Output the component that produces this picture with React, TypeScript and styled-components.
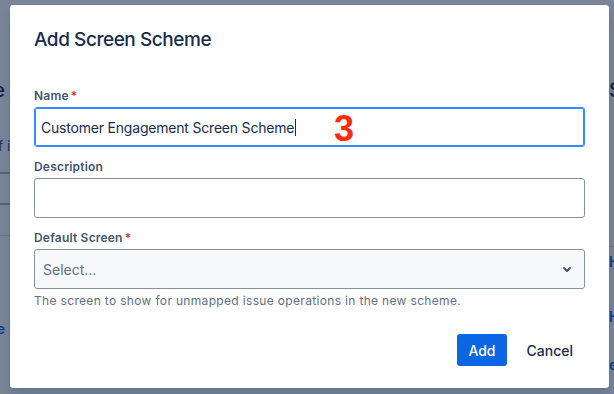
import React from "react";
import styled, { createGlobalStyle } from "styled-components";

const GlobalStyle = createGlobalStyle`
  html, body {
    margin: 0;
    padding: 0;
    font-family: Inter, "Noto Sans", "Liberation Sans", sans-serif;
    -webkit-font-smoothing: antialiased;
  }
`;

const Page = styled.div`
  position: relative;
  width: 614px;
  height: 394px;
  overflow: hidden;
  background: #ffffff;
`;

/* page that sits behind the dialog, only its edges show */
const BgPage = styled.div`
  display: flex;
  justify-content: space-between;
  height: 100%;
`;

const Edge = styled.div<{ $side: "left" | "right" }>`
  box-sizing: border-box;
  width: 10px;
  display: flex;
  flex-direction: column;
  align-items: ${(p) => (p.$side === "left" ? "flex-end" : "flex-start")};
  padding-left: ${(p) => (p.$side === "right" ? "5px" : "0")};
  padding-right: ${(p) => (p.$side === "left" ? "5px" : "0")};
  overflow: hidden;
`;

const BgHeading = styled.div<{ $top: number }>`
  margin-top: ${(p) => p.$top}px;
  font-size: 20px;
  line-height: 24px;
  font-weight: 500;
  color: #172b4d;
  white-space: nowrap;
`;

const BgText = styled.div<{ $top: number; $shift?: number }>`
  margin-top: ${(p) => p.$top}px;
  margin-right: ${(p) => -(p.$shift || 0)}px;
  font-size: 14px;
  line-height: 20px;
  color: #44546f;
  white-space: nowrap;
`;

const BgRule = styled.div<{ $top: number; $light?: boolean }>`
  align-self: stretch;
  margin-top: ${(p) => p.$top}px;
  margin-left: -10px;
  margin-right: -10px;
  height: ${(p) => (p.$light ? 1 : 2)}px;
  background: ${(p) => (p.$light ? "#dcdfe4" : "#b3b9c4")};
`;

const BgLink = styled.div<{ $top: number }>`
  margin-top: ${(p) => p.$top}px;
  font-size: 14px;
  line-height: 20px;
  font-weight: 600;
  color: #0c66e4;
  white-space: nowrap;
`;

const Blanket = styled.div`
  position: absolute;
  inset: 0;
  background: rgba(9, 30, 66, 0.54);
`;

const Dialog = styled.div`
  position: absolute;
  left: 10px;
  top: 5px;
  width: 599px;
  box-sizing: border-box;
  padding: 23px 24px 22px;
  background: #ffffff;
  border-radius: 3px;
  box-shadow: 0 8px 12px rgba(9, 30, 66, 0.15), 0 0 1px rgba(9, 30, 66, 0.31);
  display: flex;
  flex-direction: column;
`;

const Title = styled.h1`
  margin: 0 0 36px;
  font-size: 19px;
  line-height: 24px;
  font-weight: 500;
  letter-spacing: -0.45px;
  color: #172b4d;
`;

const Field = styled.div`
  display: flex;
  flex-direction: column;
  & + & {
    margin-top: 12px;
  }
`;

const Label = styled.label`
  display: block;
  margin-bottom: 3px;
  font-size: 12px;
  line-height: 16px;
  font-weight: 600;
  letter-spacing: 0.2px;
  color: #44546f;
`;

const Required = styled.span`
  margin-left: 2px;
  color: #c9372c;
`;

const TextBox = styled.div<{ $focused?: boolean }>`
  box-sizing: border-box;
  height: 40px;
  display: flex;
  align-items: center;
  padding: 0 6px;
  border: 1px solid ${(p) => (p.$focused ? "#388bff" : "#8590a2")};
  box-shadow: ${(p) => (p.$focused ? "inset 0 0 0 1px #388bff" : "none")};
  border-radius: 3px;
  background: #ffffff;
  font-size: 14px;
  letter-spacing: -0.2px;
  color: #172b4d;
  white-space: nowrap;
`;

const Caret = styled.span`
  display: inline-block;
  width: 1px;
  height: 17px;
  margin-left: 1px;
  background: #172b4d;
`;

const SelectBox = styled.div`
  box-sizing: border-box;
  height: 40px;
  display: flex;
  align-items: center;
  justify-content: space-between;
  padding: 0 5px 0 8px;
  border: 1px solid #8590a2;
  border-radius: 3px;
  background: #f7f8f9;
  font-size: 14px;
  color: #626f86;
`;

const Helper = styled.div`
  margin-top: 4px;
  font-size: 12px;
  line-height: 16px;
  letter-spacing: 0.33px;
  color: #626f86;
`;

const Footer = styled.div`
  margin-top: 25px;
  display: flex;
  justify-content: flex-end;
  gap: 8px;
`;

const Button = styled.button<{ $primary?: boolean }>`
  height: 32px;
  padding: 0 ${(p) => (p.$primary ? 11 : 12)}px;
  border: none;
  border-radius: 3px;
  font-family: inherit;
  font-size: 14px;
  font-weight: 500;
  background: ${(p) => (p.$primary ? "#0c66e4" : "transparent")};
  color: ${(p) => (p.$primary ? "#ffffff" : "#172b4d")};
  cursor: pointer;
`;

const StepMark = styled.span`
  position: absolute;
  left: 334px;
  top: 108px;
  font-family: "Liberation Sans", Arial, sans-serif;
  font-size: 36px;
  line-height: 42px;
  font-weight: 700;
  color: #ff2b0d;
`;

const Chevron = () => (
  <svg width="24" height="24" viewBox="0 0 24 24" aria-hidden>
    <path
      d="M8.292 10.293a1.009 1.009 0 000 1.419l2.939 2.965c.218.215.5.322.779.322s.556-.107.769-.322l2.93-2.955a1.01 1.01 0 000-1.419.987.987 0 00-1.406 0l-2.298 2.317-2.307-2.327a.99.99 0 00-1.406 0z"
      fill="#44546f"
    />
  </svg>
);

export default function App() {
  return (
    <Page>
      <GlobalStyle />
      <BgPage>
        <Edge $side="left">
          <BgHeading $top={78}>Screen Scheme</BgHeading>
          <BgText $top={34} $shift={10}>the default set of it</BgText>
          <BgRule $top={16} />
          <BgRule $top={29} />
          <BgRule $top={30} $light />
          <BgLink $top={83}>Default Screen Scheme</BgLink>
        </Edge>
        <Edge $side="right">
          <BgHeading $top={78}>Screens</BgHeading>
          <BgRule $top={144} $light />
          <BgLink $top={5}>Hide</BgLink>
          <BgLink $top={35}>Hide</BgLink>
          <BgLink $top={28}>edit</BgLink>
        </Edge>
      </BgPage>
      <Blanket />
      <Dialog role="dialog">
        <Title>Add Screen Scheme</Title>
        <Field>
          <Label>
            Name<Required>*</Required>
          </Label>
          <TextBox $focused>
            Customer Engagement Screen Scheme
            <Caret />
          </TextBox>
        </Field>
        <Field>
          <Label>Description</Label>
          <TextBox />
        </Field>
        <Field>
          <Label>
            Default Screen<Required>*</Required>
          </Label>
          <SelectBox>
            <span>Select...</span>
            <Chevron />
          </SelectBox>
          <Helper>The screen to show for unmapped issue operations in the new scheme.</Helper>
        </Field>
        <Footer>
          <Button $primary>Add</Button>
          <Button>Cancel</Button>
        </Footer>
      </Dialog>
      <StepMark>3</StepMark>
    </Page>
  );
}
